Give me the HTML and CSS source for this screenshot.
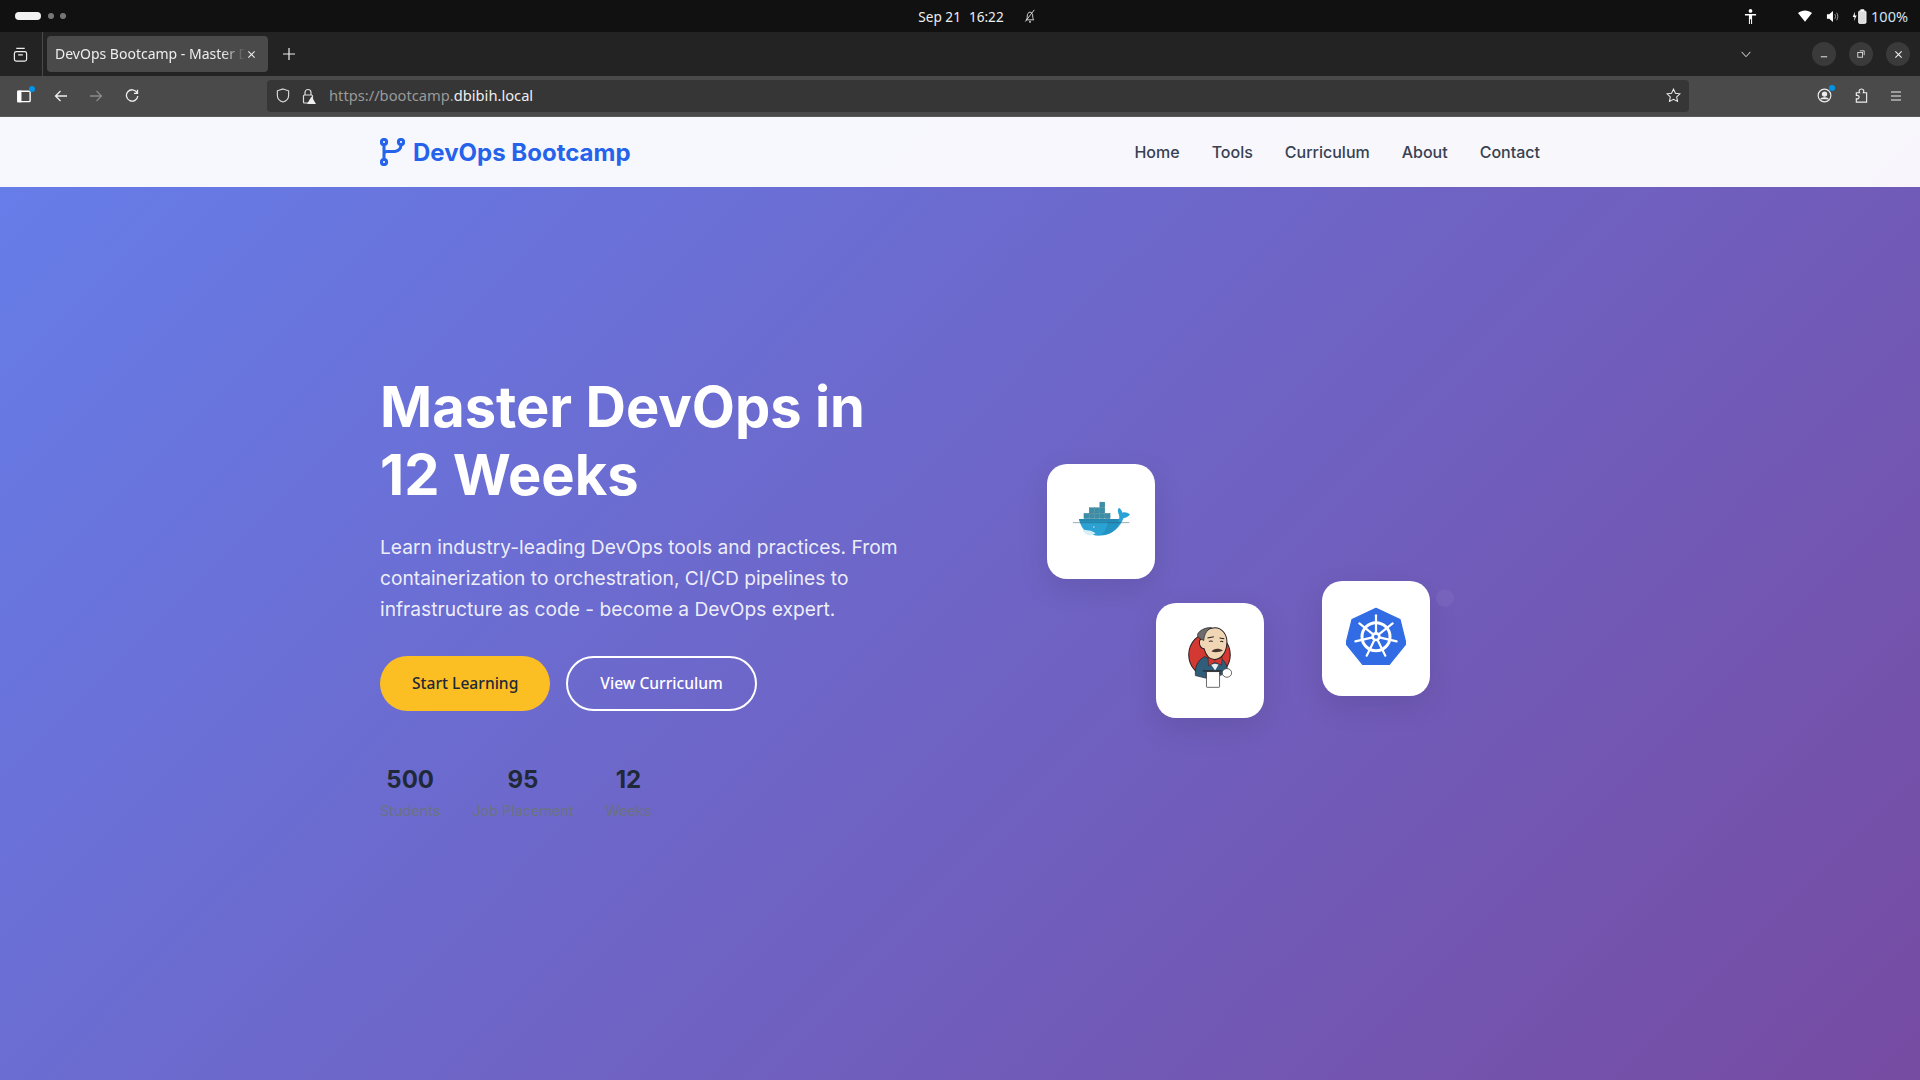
FILE: index.html
```html
<!DOCTYPE html>
<html lang="en">
  <head>
    <meta charset="UTF-8" />
    <meta name="viewport" content="width=device-width, initial-scale=1.0" />
    <title>DevOps Bootcamp - Master DevOps in 12 Weeks</title>
    <link rel="stylesheet" href="styles.css">
  </head>
  <body>
    <!-- Desktop top bar -->
    <div class="system-bar">
      <div class="workspaces">
        <span class="workspace-active"></span>
        <span class="workspace-dot"></span>
        <span class="workspace-dot"></span>
      </div>
      <div class="clock">
        <span>Sep 21</span>
        <span>16:22</span>
        <svg class="bell" viewBox="0 0 14 16" width="12" height="14">
          <path d="M2.500 12.500c1-1 1.300-2 1.300-4.500 0-2.500 1.300-4.500 3.200-4.500s3.200 2 3.200 4.500c0 2.500.3 3.500 1.300 4.500z" fill="none" stroke="#eee" stroke-width="1"/>
          <path d="M1.500 14.500 12 .8" stroke="#eee" stroke-width="1"/>
          <circle cx="7" cy="14.800" r="1.100" fill="#eee"/>
        </svg>
      </div>
      <div class="status">
        <svg class="status-person" viewBox="0 0 14 16" width="13" height="15">
          <circle cx="7" cy="2" r="2" fill="#fff"/>
          <path d="M1 5.200h12v1.600H8.700V16H7.600v-5H6.400v5H5.300V6.800H1z" fill="#fff"/>
        </svg>
        <svg class="status-wifi" viewBox="0 0 16 13" width="14" height="12">
          <path d="M0 3.200C4.500-.8 11.500-.8 16 3.200L8 13z" fill="#fff"/>
        </svg>
        <svg class="status-sound" viewBox="0 0 14 14" width="13" height="13">
          <path d="M1 4.500h2.500L7.500 1v12L3.500 9.500H1z" fill="#fff"/>
          <path d="M9.500 4.500c1 1.500 1 3.500 0 5M11.500 3c1.600 2.500 1.600 5.500 0 8" fill="none" stroke="#aaa" stroke-width="1"/>
        </svg>
        <svg class="status-battery" viewBox="0 0 16 16" width="15" height="15">
          <path d="M3 3 .8 8.500h2L2 13l3-6H3z" fill="#fff"/>
          <rect x="7" y="2" width="8" height="13.500" rx="1.500" fill="#ddd" stroke="#fff" stroke-width=".8"/>
          <rect x="9" y=".3" width="4" height="2" fill="#fff"/>
        </svg>
        <span class="status-percent">100%</span>
      </div>
    </div>

    <!-- Browser tabs -->
    <div class="tab-bar">
      <div class="tab-side">
        <svg viewBox="0 0 16 16" width="15" height="15" fill="none" stroke="#eee" stroke-width="1.300">
          <rect x="1.500" y="5" width="13" height="10" rx="2"/>
          <path d="M3.500 1.500h9M5.500 8.500h5"/>
        </svg>
      </div>
      <div class="tab">
        <span class="tab-title">DevOps Bootcamp - Master DevOps in 12 Weeks</span>
        <svg viewBox="0 0 10 10" width="9" height="9" stroke="#eee" stroke-width="1.200"><path d="M1.500 1.500l7 7M8.500 1.500l-7 7"/></svg>
      </div>
      <svg class="new-tab" viewBox="0 0 12 12" width="12" height="12" stroke="#eee" stroke-width="1.200"><path d="M6 0v12M0 6h12"/></svg>
      <svg class="tab-list" viewBox="0 0 12 8" width="12" height="7" fill="none" stroke="#eee" stroke-width="1.100"><path d="M1 1l5 5.500L11 1"/></svg>
      <div class="window-buttons">
        <span class="window-button">
          <svg viewBox="0 0 10 10" width="8" height="8" stroke="#eee" stroke-width="1.200"><path d="M1 8.500h8"/></svg>
        </span>
        <span class="window-button">
          <svg viewBox="0 0 10 10" width="8" height="8" fill="none" stroke="#eee" stroke-width="1"><rect x="1" y="3" width="6" height="6"/><path d="M3.500 1H9v5.500"/></svg>
        </span>
        <span class="window-button">
          <svg viewBox="0 0 10 10" width="9" height="9" stroke="#eee" stroke-width="1.200"><path d="M1.500 1.500l7 7M8.500 1.500l-7 7"/></svg>
        </span>
      </div>
    </div>

    <!-- Browser toolbar -->
    <div class="toolbar">
      <div class="nav-buttons">
        <span class="icon-badge">
          <svg viewBox="0 0 16 14" width="15" height="14" fill="none" stroke="#fff" stroke-width="1.500"><rect x="1" y="2" width="13" height="11" rx="1"/><rect x="1" y="2" width="3" height="11" fill="#fff"/></svg>
        </span>
        <svg viewBox="0 0 14 14" width="14" height="14" fill="none" stroke="#eee" stroke-width="1.300"><path d="M13 7H1.500M6.500 2 1.500 7l5 5"/></svg>
        <svg viewBox="0 0 14 14" width="14" height="14" fill="none" stroke="#8a8a8a" stroke-width="1.300"><path d="M1 7h11.500M7.500 2l5 5-5 5"/></svg>
        <svg viewBox="0 0 14 14" width="14" height="14" fill="none" stroke="#eee" stroke-width="1.300"><path d="M12 3.500A5.700 5.700 0 1 0 12.800 7M12.500 .8v3.500H9"/></svg>
      </div>
      <div class="address-bar">
        <svg viewBox="0 0 14 16" width="14" height="15" fill="none" stroke="#ddd" stroke-width="1.200"><path d="M7 1l6 2v5c0 3.500-3 6-6 7-3-1-6-3.500-6-7V3z"/></svg>
        <svg viewBox="0 0 14 16" width="14" height="16">
          <path d="M3 7V4.500a3 3 0 0 1 6 0V7" fill="none" stroke="#ddd" stroke-width="1.200"/>
          <rect x="1.500" y="7" width="9" height="8" rx="1" fill="none" stroke="#ddd" stroke-width="1.200"/>
          <path d="M9.500 8.500 14 16H5z" fill="#eee"/>
        </svg>
        <div class="url"><span class="url-dim">https://bootcamp.</span>dbibih.local</div>
        <svg class="bookmark" viewBox="0 0 16 16" width="15" height="15" fill="none" stroke="#eee" stroke-width="1.100"><path d="M8 1.200l2.100 4.400 4.800.6-3.500 3.300.9 4.800L8 12l-4.300 2.300.9-4.800L1.100 6.200l4.800-.6z"/></svg>
      </div>
      <div class="toolbar-right">
        <span class="icon-badge">
          <svg viewBox="0 0 16 16" width="15" height="15" fill="none" stroke="#eee" stroke-width="1.200"><circle cx="8" cy="8" r="6.800"/><circle cx="8" cy="6.500" r="2.300" fill="#eee"/><path d="M3.800 12c1-2 7.400-2 8.400 0" fill="#eee"/></svg>
        </span>
        <svg viewBox="0 0 14 16" width="14" height="15" fill="none" stroke="#eee" stroke-width="1.200"><path d="M2 5h3.500c-1-1.500-.5-4 2-4s3 2.500 2 4H13v10H2v-3.500c2 .5 3-.8 3-1.800S4 7.500 2 8z"/></svg>
        <svg viewBox="0 0 12 10" width="12" height="10" stroke="#eee" stroke-width="1.100"><path d="M1 1h10M1 5h10M1 9h10"/></svg>
      </div>
    </div>

    <!-- Page -->
    <div class="page">
      <nav class="navbar">
        <div class="nav-inner">
          <a class="logo" href="#">
            <svg viewBox="0 0 25 28" width="25" height="28" fill="none" stroke="#2563eb" stroke-width="3">
              <circle cx="4" cy="4" r="2.600"/>
              <circle cx="4" cy="24" r="2.600"/>
              <circle cx="21" cy="4" r="2.600"/>
              <path d="M4 6.600v14.800M21 6.600c0 4-2 6.400-6 6.900H7c-2 0-3 1-3 2.500"/>
            </svg>
            <span>DevOps Bootcamp</span>
          </a>
          <ul class="nav-links">
            <li><a href="#">Home</a></li>
            <li><a href="#">Tools</a></li>
            <li><a href="#">Curriculum</a></li>
            <li><a href="#">About</a></li>
            <li><a href="#">Contact</a></li>
          </ul>
        </div>
      </nav>

      <section class="hero">
        <div class="hero-inner">
          <div class="hero-text">
            <h1>Master DevOps in 12 Weeks</h1>
            <p class="hero-lead">Learn industry-leading DevOps tools and practices. From containerization to orchestration, CI/CD pipelines to infrastructure as code - become a DevOps expert.</p>
            <div class="hero-buttons">
              <a class="btn btn-primary" href="#">Start Learning</a>
              <a class="btn btn-outline" href="#">View Curriculum</a>
            </div>
            <div class="stats">
              <div class="stat">
                <div class="stat-number">500</div>
                <div class="stat-label">Students</div>
              </div>
              <div class="stat">
                <div class="stat-number">95</div>
                <div class="stat-label">Job Placement</div>
              </div>
              <div class="stat">
                <div class="stat-number">12</div>
                <div class="stat-label">Weeks</div>
              </div>
            </div>
          </div>

          <div class="hero-visual">
            <div class="tool-card card-docker">
              <svg class="logo-docker" viewBox="125 150 178 108">
                <g fill="#3c8ea6" stroke="#2a7389" stroke-width="1">
                  <rect x="161" y="187" width="15" height="16"/>
                  <rect x="177" y="187" width="15" height="16"/>
                  <rect x="193" y="187" width="15" height="16"/>
                  <rect x="209" y="187" width="15" height="16"/>
                  <rect x="225" y="187" width="15" height="16"/>
                  <rect x="177" y="170" width="15" height="16"/>
                  <rect x="193" y="170" width="15" height="16"/>
                  <rect x="209" y="170" width="15" height="16"/>
                  <rect x="209" y="153" width="15" height="16"/>
                </g>
                <path d="M146 204h120c3-2 2-8 0-14-4-10-3-18 1-19 4 1 9 9 10 14 7-3 15-1 23 5-5 8-13 10-20 12-9 26-32 50-66 52-32 2-60-10-68-50z" fill="#2aa3d4"/>
                <path d="M232 212h38c-7 18-22 34-41 38-6 1-12 2-18 2 14-8 20-24 21-40z" fill="#2293c2"/>
                <path d="M156 236c14 2 28 2 40 11-8 6-16 7-22 6-8-2-14-9-18-17z" fill="#d8eef6"/>
                <path d="M146 204h120l-1 8H149z" fill="#2389b3"/>
                <path d="M128 215h170" stroke="#2b5566" stroke-width="1.500"/>
                <circle cx="191" cy="228" r="3" fill="#d8eef6" stroke="#1d6b8c"/>
              </svg>
            </div>
            <div class="tool-card card-jenkins">
              <svg class="logo-jenkins" viewBox="125 92 140 188">
                <ellipse cx="192" cy="178" rx="62" ry="65" fill="#d33833" stroke="#231f20" stroke-width="3"/>
                <path d="M150 240c-2-25 5-45 28-57l22 12 25-7c13 7 20 22 21 37l-21 15-3-12h-39l0 20z" fill="#2f5d7a" stroke="#231f20" stroke-width="2"/>
                <path d="M170 130c0-22 20-33 38-33 22 0 37 21 36 45-1 26-14 48-36 50-18 0-28-17-32-32-8 0-16-10-14-22 2-8 8-8 8-8z" fill="#f0d6b5" stroke="#231f20" stroke-width="3"/>
                <path d="M168 132c-13-7-16-14-5-24 9-8 22-12 35-11-16 7-22 23-23 38z" fill="#6d6b6d" stroke="#231f20" stroke-width="2"/>
                <path d="M198 168c7-10 24-10 34-2-10 4-24 6-34 2z" fill="#49342b"/>
                <path d="M186 128l19-4M222 128l14 2M190 138c4-2 8-2 12 0M224 138c3-1 6-1 9 1" stroke="#231f20" stroke-width="3" fill="none"/>
                <path d="M188 186l20 8 22-9-2 24-20-9-19 11z" fill="#d33833" stroke="#231f20" stroke-width="1.500"/>
                <path d="M197 208l11-3 11 2-10 18z" fill="#ecf0f1"/>
                <rect x="183" y="228" width="39" height="47" rx="2" fill="#fff" stroke="#231f20" stroke-width="2"/>
                <path d="M172 226h56" stroke="#231f20" stroke-width="3"/>
                <ellipse cx="244" cy="232" rx="14" ry="13" fill="#fff" stroke="#231f20" stroke-width="2"/>
              </svg>
            </div>
            <div class="tool-card card-k8s">
              <svg class="logo-k8s" viewBox="108 108 180 174">
                <path d="M198 112l72 34 18 72-50 62h-80l-50-62 18-72z" fill="#326ce5" stroke="#326ce5" stroke-width="4" stroke-linejoin="round"/>
                <g fill="none" stroke="#fff">
                  <circle cx="198" cy="197" r="42" stroke-width="9"/>
                  <g stroke-width="6.500" stroke-linecap="round">
                    <path d="M198 197V133"/>
                    <path d="M198 197 248 157"/>
                    <path d="M198 197 260 211"/>
                    <path d="M198 197 226 254"/>
                    <path d="M198 197 170 254"/>
                    <path d="M198 197 136 211"/>
                    <path d="M198 197 148 157"/>
                  </g>
                </g>
                <circle cx="198" cy="197" r="14" fill="#fff"/>
                <circle cx="198" cy="197" r="6" fill="#326ce5"/>
              </svg>
            </div>
            <span class="float-dot"></span>
          </div>
        </div>
      </section>
    </div>
  </body>
</html>
```

FILE: styles.css
```css
/* General Styles */
* {
  box-sizing: border-box;
}

html,
body {
  height: 100%;
}

body {
  display: flex;
  flex-direction: column;
  margin: 0;
  font-family: Inter, "Liberation Sans", sans-serif;
  overflow: hidden;
}

a {
  text-decoration: none;
}

svg {
  display: block;
  flex: none;
}

/* Desktop top bar */
.system-bar {
  display: grid;
  grid-template-columns: 1fr auto 1fr;
  align-items: center;
  height: 32px;
  padding: 0 12px 0 15px;
  background: #111;
  color: #eee;
  font-family: "Noto Sans", sans-serif;
  font-size: 13.6px;
}

.workspaces {
  display: flex;
  align-items: center;
  gap: 6px;
}

.workspace-active {
  width: 26px;
  height: 8px;
  margin-right: 1px;
  border-radius: 4px;
  background: #f2f2f2;
}

.workspace-dot {
  width: 6px;
  height: 6px;
  border-radius: 50%;
  background: #777;
}

.clock {
  display: flex;
  align-items: center;
  gap: 8px;
  margin-left: 31px;
}

.bell {
  margin-left: 12px;
}

.status {
  display: flex;
  align-items: center;
  justify-content: flex-end;
  color: #cfe3f5;
}

.status-person {
  margin-right: 41px;
}

.status-wifi {
  margin-right: 14px;
}

.status-sound {
  margin-right: 13px;
}

.status-battery {
  margin-right: 4px;
}

.status-percent {
  font-size: 14.5px;
}

/* Browser tabs */
.tab-bar {
  display: flex;
  align-items: center;
  height: 44px;
  background: #232323;
}

.tab-side {
  display: flex;
  align-items: center;
  width: 43px;
  height: 100%;
  padding-left: 13px;
  border-right: 1px solid #4a4a4a;
}

.tab {
  display: flex;
  align-items: center;
  justify-content: space-between;
  width: 221px;
  height: 36px;
  margin-left: 4px;
  padding: 0 12px 0 8px;
  border-radius: 4px;
  background: #4a4a4a;
  color: #eee;
  font-family: "Noto Sans", sans-serif;
  font-size: 14px;
}

.tab-title {
  width: 190px;
  margin-bottom: 1px;
  overflow: hidden;
  white-space: nowrap;
  -webkit-mask-image: linear-gradient(90deg, #000 88%, transparent);
  mask-image: linear-gradient(90deg, #000 88%, transparent);
}

.new-tab {
  margin-left: 15px;
}

.tab-list {
  margin-left: auto;
  margin-right: 60px;
}

.window-buttons {
  display: flex;
  gap: 13px;
  padding-right: 10px;
}

.window-button {
  display: flex;
  align-items: center;
  justify-content: center;
  width: 24px;
  height: 24px;
  border-radius: 50%;
  background: #3a3a3a;
}

/* Browser toolbar */
.toolbar {
  display: flex;
  align-items: center;
  height: 41px;
  padding-bottom: 1px;
  background: #4a4a4a;
  border-bottom: 1px solid #5a5a5a;
}

.nav-buttons {
  display: flex;
  align-items: center;
  gap: 21.500px;
  width: 267px;
  padding-left: 17px;
}

.icon-badge {
  position: relative;
  display: block;
}

.icon-badge::after {
  content: "";
  position: absolute;
  top: -3px;
  right: -3px;
  width: 6px;
  height: 6px;
  border-radius: 50%;
  background: #0095e8;
}

.address-bar {
  display: flex;
  align-items: center;
  gap: 12px;
  width: 1422px;
  height: 32px;
  padding: 0 8px 0 9px;
  border-radius: 4px;
  background: #363636;
}

.url {
  margin-left: 1px;
  margin-bottom: 1px;
  color: #eee;
  font-family: "Noto Sans", sans-serif;
  font-size: 14.7px;
}

.url-dim {
  color: #9a9a9a;
}

.bookmark {
  margin-left: auto;
}

.toolbar-right {
  display: flex;
  align-items: center;
  gap: 22px;
  margin-left: auto;
  padding-right: 18px;
}

/* Page */
.page {
  position: relative;
  flex: 1;
  min-height: 0;
}

.navbar {
  position: absolute;
  top: 0;
  left: 0;
  right: 0;
  z-index: 2;
  height: 70px;
  background: rgba(255, 255, 255, 0.95);
}

.nav-inner {
  display: flex;
  align-items: center;
  justify-content: space-between;
  max-width: 1200px;
  height: 100%;
  margin: 0 auto;
  padding: 0 20px;
}

.logo {
  display: flex;
  align-items: center;
  gap: 8px;
  color: #2563eb;
  font-size: 24px;
  font-weight: 700;
}

.nav-links {
  display: flex;
  gap: 32px;
  margin: 0;
  padding: 0;
  list-style: none;
}

.nav-links a {
  color: #374151;
  font-size: 16px;
  font-weight: 500;
}

/* Hero */
.hero {
  display: flex;
  align-items: center;
  height: 100%;
  background: linear-gradient(135deg, #667eea 0%, #764ba2 100%);
}

.hero-inner {
  display: grid;
  grid-template-columns: 1fr 1fr;
  gap: 64px;
  align-items: center;
  width: 100%;
  max-width: 1200px;
  margin: 0 auto;
  padding: 0 20px;
}

h1 {
  margin: 0 0 23px;
  color: #fff;
  font-size: 56px;
  font-weight: 700;
  line-height: 68px;
}

.hero-lead {
  margin: 0 0 31px;
  color: rgba(255, 255, 255, 0.9);
  font-size: 19.2px;
  line-height: 1.6;
}

.hero-buttons {
  display: flex;
  gap: 16px;
  margin-bottom: 50px;
}

.btn {
  padding: 16px 32px;
  border-radius: 50px;
  font-family: "Noto Sans", sans-serif;
  font-size: 15.6px;
  font-weight: 500;
  line-height: 23px;
}

.btn-primary {
  background: #fbbf24;
  color: #1f2937;
}

.btn-outline {
  border: 2px solid #fff;
  padding: 14px 32px;
  color: #fff;
}

.stats {
  display: flex;
  gap: 32px;
  padding-bottom: 2px;
}

.stat {
  text-align: center;
}

.stat-number {
  color: #1f2937;
  font-size: 24px;
  font-weight: 700;
  line-height: 38px;
}

.stat-label {
  color: #6b7280;
  font-size: 14.4px;
  line-height: 23px;
}

/* Floating tool cards */
.hero-visual {
  position: relative;
  height: 401px;
}

.tool-card {
  position: absolute;
  display: flex;
  align-items: center;
  justify-content: center;
  width: 108px;
  height: 115px;
  padding-bottom: 6px;
  border-radius: 20px;
  background: #fff;
  box-shadow: 0 10px 30px rgba(0, 0, 0, 0.1);
}

.card-docker {
  top: 66px;
  left: 55px;
}

.card-jenkins {
  top: 205px;
  left: 164px;
}

.card-k8s {
  top: 183px;
  left: 330px;
}

.logo-docker {
  width: 59px;
  height: 36px;
}

.logo-jenkins {
  width: 47px;
  height: 63px;
}

.logo-k8s {
  width: 60px;
  height: 58px;
}

.float-dot {
  position: absolute;
  top: 191px;
  left: 444px;
  width: 18px;
  height: 18px;
  border-radius: 50%;
  background: rgba(255, 255, 255, 0.05);
}
```
